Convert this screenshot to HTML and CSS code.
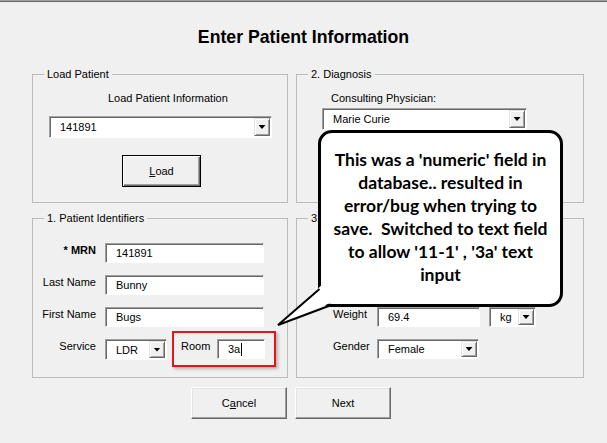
FILE: index.html
```html
<!DOCTYPE html>
<html>
<head>
<meta charset="utf-8">
<link rel="stylesheet" href="styles.css">
</head>
<body>
<div class="topbar"></div>
<h1 class="title">Enter Patient Information</h1>
<div class="grid">
  <fieldset class="group g-load">
    <legend>Load Patient</legend>
    <div class="load-label">Load Patient Information</div>
    <div class="combo combo-load"><span class="val">141891</span><span class="drop"><i class="arrow"></i></span></div>
    <button class="btn btn-default btn-load"><u>L</u>oad</button>
  </fieldset>
  <fieldset class="group g-diag">
    <legend>2. Diagnosis</legend>
    <div class="diag-label">Consulting Physician:</div>
    <div class="combo combo-diag"><span class="val">Marie Curie</span><span class="drop"><i class="arrow"></i></span></div>
  </fieldset>
  <fieldset class="group g-ident">
    <legend>1. Patient Identifiers</legend>
    <div class="ident-form">
      <div class="lbl lbl-bold">* MRN</div>
      <div class="field field-wide">141891</div>
      <div class="lbl">Last Name</div>
      <div class="field field-wide">Bunny</div>
      <div class="lbl">First Name</div>
      <div class="field field-wide">Bugs</div>
      <div class="lbl">Service</div>
      <div class="service-row">
        <div class="combo combo-service"><span class="val">LDR</span><span class="drop"><i class="arrow"></i></span></div>
        <div class="highlight">
          <div class="room-lbl">Room</div>
          <div class="field field-room">3a<span class="caret"></span></div>
        </div>
      </div>
    </div>
  </fieldset>
  <fieldset class="group g-measure">
    <legend>3.</legend>
    <div class="measure-form">
      <div class="mlbl">Weight</div>
      <div class="field field-weight">69.4</div>
      <div class="combo combo-unit"><span class="val">kg</span><span class="drop"><i class="arrow"></i></span></div>
      <div class="mlbl">Gender</div>
      <div class="combo combo-gender"><span class="val">Female</span><span class="drop"><i class="arrow"></i></span></div>
    </div>
  </fieldset>
</div>
<div class="actions">
  <button class="btn btn-action">C<u>a</u>ncel</button>
  <button class="btn btn-action">Next</button>
</div>
<div class="callout">
  <p class="callout-text">This was a 'numeric' field in<br>database.. resulted in<br>error/bug when trying to<br>save.&nbsp; Switched to text field<br>to allow '11-1' , '3a' text<br>input</p>
  <svg class="tail" width="70" height="50" viewBox="0 0 70 50">
    <polygon points="54,3 8,45 65,21" fill="#fff"/>
    <polyline points="49.5,9 8,45 60,25.5" fill="none" stroke="#000" stroke-width="2" stroke-linejoin="miter"/>
  </svg>
</div>
</body>
</html>
```
FILE: styles.css
```css
* { box-sizing: border-box; }
html, body { margin: 0; padding: 0; }
body {
  width: 607px;
  height: 443px;
  overflow: hidden;
  position: relative;
  background: #f0f0f0;
  font-family: "Liberation Sans", Arial, sans-serif;
  font-size: 11px;
  color: #000;
}
.topbar {
  height: 2px;
  border-top: 1px solid #a0a0a0;
  border-bottom: 1px solid #696969;
}
.title {
  margin: 25px 0 0;
  font-size: 17.7px;
  line-height: 20px;
  font-weight: bold;
  text-align: center;
}
.grid {
  margin: 21px 0 0 32px;
  display: grid;
  grid-template-columns: 256px 288px;
  grid-template-rows: 135px 166px;
  column-gap: 8px;
  row-gap: 9px;
}
.group {
  margin: 0;
  padding: 0;
  min-width: 0;
  height: 100%;
  border: 1px solid #bcbcbc;
}
.group legend {
  margin-left: 11px;
  padding: 0 3px;
  line-height: 13px;
  font-size: 11px;
}
.load-label {
  margin-top: 10px;
  padding-left: 75px;
  line-height: 14px;
}
.diag-label {
  margin-top: 10px;
  padding-left: 34px;
  line-height: 14px;
}
.combo {
  display: flex;
  flex-shrink: 0;
  height: 22px;
  background: #fff;
  border: 1px solid;
  border-color: #a0a0a0 #fff #fff #a0a0a0;
  box-shadow: inset 1px 1px 0 #696969;
  padding: 1px;
}
.combo .val {
  flex: 1;
  display: flex;
  align-items: center;
  padding-left: 9px;
}
.drop {
  width: 16px;
  background: #f0f0f0;
  border: 1px solid;
  border-color: #e3e3e3 #696969 #696969 #e3e3e3;
  box-shadow: inset 1px 1px 0 #fff, inset -1px -1px 0 #a0a0a0;
  display: flex;
  align-items: center;
  justify-content: center;
}
.arrow {
  display: block;
  width: 7px;
  height: 4px;
  background: #000;
  clip-path: polygon(0 0, 100% 0, 50% 100%);
}
.combo-load { margin: 11px 0 0 16px; width: 223px; }
.combo-diag { margin: 3px 0 0 25px; width: 205px; }
.btn {
  font-family: "Liberation Sans", Arial, sans-serif;
  font-size: 11px;
  color: #000;
  background: #f0f0f0;
  border: 1px solid;
  border-color: #fff #696969 #696969 #fff;
  box-shadow: inset -1px -1px 0 #a0a0a0, inset 1px 1px 0 #e3e3e3;
  padding: 0;
}
.btn-default {
  border-color: #000;
  box-shadow: inset 1px 1px 0 #fff, inset -1px -1px 0 #696969, inset -2px -2px 0 #a0a0a0;
}
.btn-load {
  display: block;
  margin: 17px 0 0 89px;
  width: 79px;
  height: 32px;
}
.ident-form {
  display: grid;
  grid-template-columns: 63px 171px;
  column-gap: 9px;
  row-gap: 12px;
  padding-top: 18px;
}
.lbl {
  text-align: right;
  line-height: 14px;
  align-self: start;
  white-space: nowrap;
}
.lbl-bold { font-weight: bold; }
.field {
  height: 20px;
  background: #fff;
  border: 1px solid;
  border-color: #a0a0a0 #fff #fff #a0a0a0;
  box-shadow: inset 1px 1px 0 #696969;
  padding-left: 10px;
  display: flex;
  align-items: center;
  flex-shrink: 0;
}
.field-wide { width: 159px; }
.service-row {
  display: flex;
  align-items: center;
  gap: 5px;
}
.combo-service { width: 62px; height: 21px; }
.highlight {
  display: flex;
  flex-shrink: 0;
  align-items: flex-start;
  width: 104px;
  height: 36px;
  margin: -8px 0 -7px;
  border: 2px solid #e8141c;
  padding: 6px 0 0 7px;
  box-shadow: 2px 2px 3px rgba(0, 0, 0, 0.25);
}
.room-lbl { width: 36px; line-height: 14px; flex-shrink: 0; }
.field-room { width: 48px; }
.caret {
  display: inline-block;
  width: 1px;
  height: 13px;
  background: #000;
  margin-left: 1px;
}
.measure-form {
  display: grid;
  grid-template-columns: 35px 103px 47px;
  column-gap: 9px;
  row-gap: 12px;
  padding: 82px 0 0 36px;
}
.mlbl { line-height: 14px; align-self: start; }
.combo-unit { height: 20px; }
.combo-gender { grid-column: 2 / span 1; width: 102px; height: 20px; }
.actions {
  display: flex;
  gap: 8px;
  margin: 9px 0 0 191px;
}
.btn-action { width: 96px; height: 32px; }
.callout {
  position: absolute;
  left: 318px;
  top: 130px;
  width: 245px;
  height: 177px;
  background: #fff;
  border: 3px solid #000;
  border-radius: 14px;
}
.callout-text {
  margin: 0;
  padding-top: 15px;
  text-align: center;
  font-family: Lato, "Open Sans", sans-serif;
  font-weight: bold;
  font-size: 17.5px;
  line-height: 23px;
  white-space: nowrap;
}
.tail {
  position: absolute;
  left: -51px;
  top: 147px;
  overflow: visible;
}
```
